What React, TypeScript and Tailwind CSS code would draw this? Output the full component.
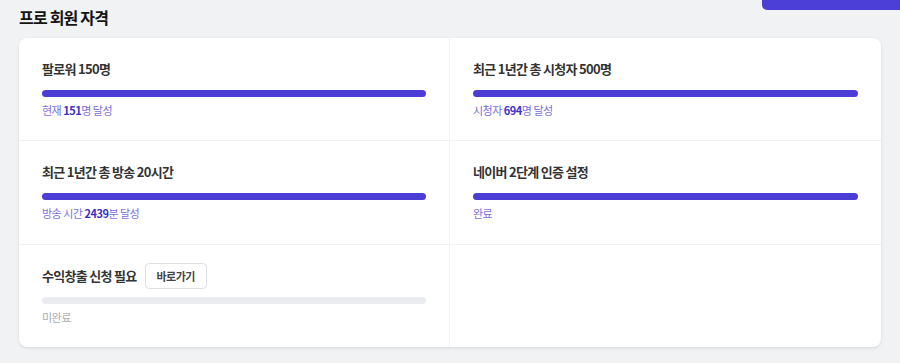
const items = [
  { title: '팔로워 150명', done: true, pre: '현재 ', num: '151', post: '명 달성' },
  { title: '최근 1년간 총 시청자 500명', done: true, pre: '시청자 ', num: '694', post: '명 달성' },
  { title: '최근 1년간 총 방송 20시간', done: true, pre: '방송 시간 ', num: '2439', post: '분 달성' },
  { title: '네이버 2단계 인증 설정', done: true, pre: '완료', num: '', post: '' },
];

function Cell({
  title,
  done,
  children,
  action,
  className = '',
}: {
  title: string;
  done: boolean;
  children: React.ReactNode;
  action?: boolean;
  className?: string;
}) {
  return (
    <div className={`px-[23px] pt-[22px] ${className}`}>
      <div className="flex h-[18px] items-center gap-2">
        <span className="text-[13px] font-bold tracking-[-0.7px] text-[#333]">{title}</span>
        {action && (
          <button className="-my-[4px] h-[26px] rounded-[4px] border border-[#dedfe3] bg-white px-[11px] text-[11px] font-bold tracking-[-0.6px] text-[#444]">
            바로가기
          </button>
        )}
      </div>
      <div
        className={`mt-[12px] h-[7px] w-full rounded-full ${done ? 'bg-[#4c3dd6]' : 'bg-[#ebecf0]'}`}
      />
      <div
        className={`mt-[5px] h-[16px] text-[11px] leading-[16px] tracking-[-0.5px] ${done ? 'text-[#7a6fe0]' : 'text-[#a9abb0]'}`}
      >
        {children}
      </div>
    </div>
  );
}

export default function App() {
  return (
    <div
      className="relative h-[363px] w-[900px] overflow-hidden bg-[#f1f2f4] px-[19px]"
      style={{ fontFamily: '"Noto Sans CJK KR", "Noto Sans", sans-serif' }}
    >
      <div className="absolute right-0 top-[-21px] flex h-[31px] w-[138px] items-end rounded-bl-[5px] bg-[#4b3fd8] pb-[12px] pl-[14px] text-[12px] font-bold leading-[14px] text-white">
        수익창출 신청
      </div>
      <div className="flex h-[38px] items-start pt-[5px]">
        <h2 className="text-[16px] font-bold tracking-[-0.8px] text-[#141414]">프로 회원 자격</h2>
      </div>
      <div className="grid grid-cols-2 overflow-hidden rounded-[8px] bg-white shadow-[0_1px_3px_rgba(0,0,0,0.12)]">
        {items.map((it, i) => (
          <Cell
            key={i}
            title={it.title}
            done={it.done}
            className={`border-b border-[#f1f1f3] ${i < 2 ? 'pb-[22px]' : 'pb-[23px]'} ${i % 2 === 0 ? 'border-r' : ''}`}
          >
            {it.pre}
            {it.num && <b className="font-bold text-[#3c2fc7]">{it.num}</b>}
            {it.post}
          </Cell>
        ))}
        <Cell title="수익창출 신청 필요" done={false} action className="border-r border-[#f1f1f3] pb-[22px]">
          미완료
        </Cell>
        <div />
      </div>
    </div>
  );
}
